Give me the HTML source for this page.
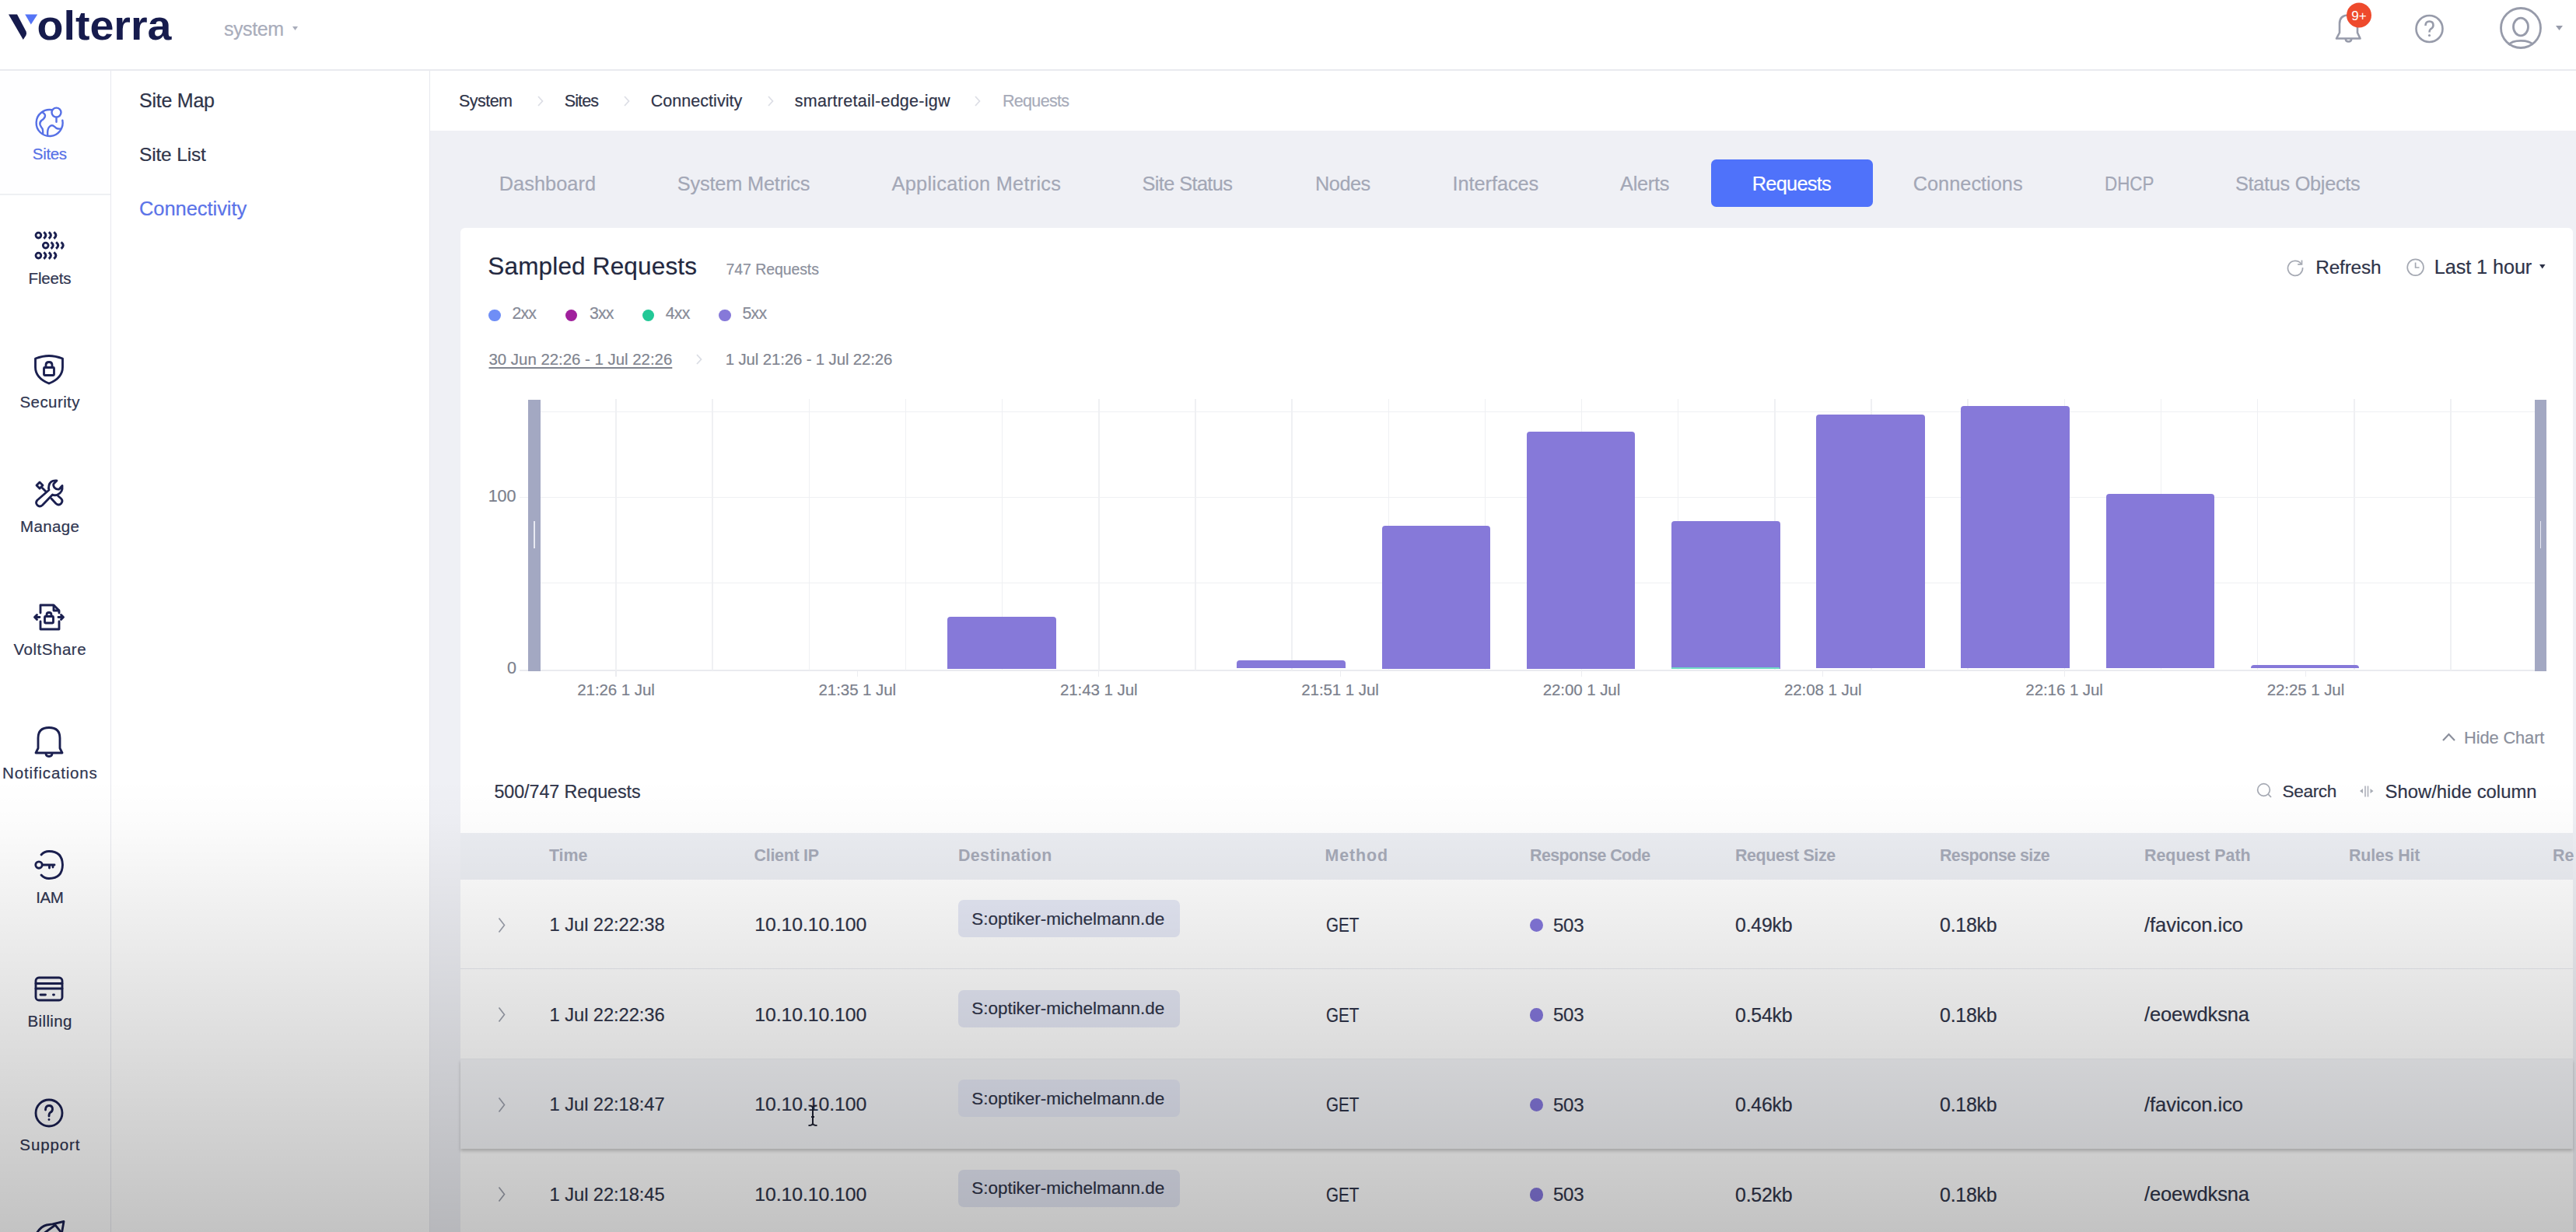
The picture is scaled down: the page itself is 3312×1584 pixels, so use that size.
<!DOCTYPE html>
<html><head><meta charset="utf-8"><style>
html,body{margin:0;padding:0;}
body{width:3312px;height:1584px;position:relative;overflow:hidden;background:#fff;font-family:"Liberation Sans", sans-serif;}
.t{position:absolute;line-height:1;white-space:nowrap;-webkit-text-stroke:0.2px currentColor;}
.r{position:absolute;}
</style></head><body>
<div class="r" style="left:0.0px;top:0.0px;width:3312.0px;height:90.0px;background:#ffffff;"></div>
<div class="r" style="left:0.0px;top:89.0px;width:3312.0px;height:2.0px;background:#e9eaef;"></div>
<div class="r" style="left:0.0px;top:91.0px;width:143.0px;height:1493.0px;background:#ffffff;"></div>
<div class="r" style="left:142.0px;top:91.0px;width:1.0px;height:1493.0px;background:#e7e8ee;"></div>
<div class="r" style="left:143.0px;top:91.0px;width:410.0px;height:1493.0px;background:#ffffff;"></div>
<div class="r" style="left:552.0px;top:91.0px;width:1.0px;height:1493.0px;background:#e7e8ee;"></div>
<div class="r" style="left:553.0px;top:91.0px;width:2759.0px;height:77.0px;background:#ffffff;"></div>
<div class="r" style="left:553.0px;top:168.0px;width:2759.0px;height:1416.0px;background:#eff0f5;"></div>
<div class="r" style="left:0.0px;top:91.0px;width:142.0px;height:158.0px;background:#fefeff;"></div>
<div class="r" style="left:0.0px;top:249.0px;width:142.0px;height:2.0px;background:#eef0f3;"></div>
<svg class="r" style="left:0;top:0" width="240" height="90" viewBox="0 0 240 90">
<path d="M11 18.4 L22 18.4 L33.6 40.5 Q34.6 43 33.4 45.5 L29.8 51 Z" fill="#161b4d"/>
<path d="M32.2 18.4 L48.2 18.4 L39.8 31.4 Z" fill="#5574f5"/>
<text x="47.5" y="51" font-family="Liberation Sans" font-weight="700" font-size="51" fill="#161b4d" textLength="173" lengthAdjust="spacingAndGlyphs">olterra</text>
</svg>
<div class="t" style="left:288.0px;top:25.2px;font-size:25px;color:#a9adbb;letter-spacing:-0.44px;">system</div>
<svg class="r" style="left:375px;top:33px" width="10" height="8"><path d="M1 1 L8 1 L4.5 6 Z" fill="#a9adbb"/></svg>
<svg class="r" style="left:2990px;top:0px" width="80" height="70" viewBox="0 0 80 70">
<path d="M14 49.5 L44.5 49.5 L41 42 L41 30.5 Q41 19.5 29.5 19.5 Q18 19.5 18 30.5 L18 42 Z" fill="none" stroke="#979baa" stroke-width="2.6" stroke-linejoin="round"/>
<path d="M25.8 50 Q25.8 53.5 29.5 53.5 Q33.2 53.5 33.2 50" fill="none" stroke="#979baa" stroke-width="2.6"/>
<circle cx="43" cy="19.5" r="16" fill="#ee4a2c"/>
<text x="43" y="26" text-anchor="middle" font-family="Liberation Sans" font-size="17" fill="#fff">9+</text>
</svg>
<svg class="r" style="left:3100px;top:14px" width="48" height="48" viewBox="0 0 48 48">
<circle cx="23.5" cy="23" r="17" fill="none" stroke="#979baa" stroke-width="2.6"/>
<path d="M18.5 19 Q18.5 13.5 23.5 13.5 Q28.5 13.5 28.5 18.5 Q28.5 21.5 25 23.5 Q23.5 24.5 23.5 27.5" fill="none" stroke="#979baa" stroke-width="2.6"/>
<circle cx="23.5" cy="31.5" r="1.6" fill="#979baa"/>
</svg>
<svg class="r" style="left:3210px;top:4px" width="64" height="64" viewBox="0 0 64 64">
<circle cx="31" cy="32" r="25.5" fill="none" stroke="#979baa" stroke-width="2.8"/>
<ellipse cx="31" cy="30.5" rx="9.5" ry="11.3" fill="none" stroke="#979baa" stroke-width="2.8"/>
<path d="M15.5 54 Q19 48.3 31 48.3 Q43 48.3 46.5 53.5" fill="none" stroke="#979baa" stroke-width="2.8"/>
</svg>
<svg class="r" style="left:3285px;top:32px" width="12" height="9"><path d="M1 1 L10 1 L5.5 7 Z" fill="#979baa"/></svg>
<div class="t" style="left:-236.2px;width:600px;text-align:center;top:188.3px;font-size:20.5px;color:#5670e6;letter-spacing:-0.32px;">Sites</div>
<div class="t" style="left:-236.1px;width:600px;text-align:center;top:347.6px;font-size:20.5px;color:#2f3550;letter-spacing:-0.19px;">Fleets</div>
<div class="t" style="left:-235.8px;width:600px;text-align:center;top:507.2px;font-size:20.5px;color:#2f3550;letter-spacing:0.42px;">Security</div>
<div class="t" style="left:-235.8px;width:600px;text-align:center;top:666.6px;font-size:20.5px;color:#2f3550;letter-spacing:0.38px;">Manage</div>
<div class="t" style="left:-235.7px;width:600px;text-align:center;top:824.6px;font-size:20.5px;color:#2f3550;letter-spacing:0.51px;">VoltShare</div>
<div class="t" style="left:-235.6px;width:600px;text-align:center;top:984.2px;font-size:20.5px;color:#2f3550;letter-spacing:0.84px;">Notifications</div>
<div class="t" style="left:-236.2px;width:600px;text-align:center;top:1143.6px;font-size:20.5px;color:#2f3550;letter-spacing:-0.48px;">IAM</div>
<div class="t" style="left:-235.8px;width:600px;text-align:center;top:1303.0px;font-size:20.5px;color:#2f3550;letter-spacing:0.37px;">Billing</div>
<div class="t" style="left:-235.6px;width:600px;text-align:center;top:1462.4px;font-size:20.5px;color:#2f3550;letter-spacing:0.90px;">Support</div>
<svg class="r" style="left:39.0px;top:133.0px" width="48" height="48" viewBox="0 0 48 48"><g fill="none" stroke="#5670e6" stroke-width="2.4" stroke-linecap="round" stroke-linejoin="round">
<path d="M27.6 8.3 A17 17 0 1 0 41.3 21.6"/>
<circle cx="33.5" cy="11.6" r="6"/><path d="M33.5 17.6 L33.5 23.8"/>
<path d="M15.3 11.2 Q19.6 13.6 18.9 16.6 Q18 19.8 14.2 22 Q11.6 24.4 12.6 27.6 Q13.6 30 15.6 32.5 Q16.4 35 16.2 38.5"/>
<path d="M22.2 40.6 Q21.6 33 24.5 30 Q27 27.5 29.5 28.7 Q31.5 30 33.5 31.8 Q36 33 39.8 32.4"/>
</g></svg>
<svg class="r" style="left:39.0px;top:291.0px" width="48" height="48" viewBox="0 0 48 48"><circle cx="10.4" cy="11.6" r="3.4" fill="none" stroke="#1b2050" stroke-width="2.8"/><path d="M17.299999999999997 7.3999999999999995 Q22.5 11.6 17.299999999999997 15.8" fill="none" stroke="#1b2050" stroke-width="3.1"/><path d="M23.799999999999997 7.3999999999999995 Q29.0 11.6 23.799999999999997 15.8" fill="none" stroke="#1b2050" stroke-width="3.1"/><path d="M30.299999999999997 7.3999999999999995 Q35.5 11.6 30.299999999999997 15.8" fill="none" stroke="#1b2050" stroke-width="3.1"/><circle cx="19.7" cy="24.6" r="3.4" fill="none" stroke="#1b2050" stroke-width="2.8"/><path d="M26.599999999999998 20.400000000000002 Q31.8 24.6 26.599999999999998 28.8" fill="none" stroke="#1b2050" stroke-width="3.1"/><path d="M33.1 20.400000000000002 Q38.300000000000004 24.6 33.1 28.8" fill="none" stroke="#1b2050" stroke-width="3.1"/><path d="M39.6 20.400000000000002 Q44.800000000000004 24.6 39.6 28.8" fill="none" stroke="#1b2050" stroke-width="3.1"/><circle cx="10.4" cy="37.6" r="3.4" fill="none" stroke="#1b2050" stroke-width="2.8"/><path d="M17.299999999999997 33.4 Q22.5 37.6 17.299999999999997 41.800000000000004" fill="none" stroke="#1b2050" stroke-width="3.1"/><path d="M23.799999999999997 33.4 Q29.0 37.6 23.799999999999997 41.800000000000004" fill="none" stroke="#1b2050" stroke-width="3.1"/><path d="M30.299999999999997 33.4 Q35.5 37.6 30.299999999999997 41.800000000000004" fill="none" stroke="#1b2050" stroke-width="3.1"/></svg>
<svg class="r" style="left:39.0px;top:450.4px" width="48" height="48" viewBox="0 0 48 48"><path d="M6.5 11 Q16 7.5 24 7.5 Q32 7.5 41.5 11 L41.5 22 Q41.5 36 24 43 Q6.5 36 6.5 22 Z" fill="none" stroke="#1b2050" stroke-width="2.85" stroke-linecap="round" stroke-linejoin="round"/>
<rect x="17.5" y="22.5" width="13" height="10" rx="1" fill="none" stroke="#1b2050" stroke-width="2.85" stroke-linecap="round" stroke-linejoin="round"/><path d="M20 22.5 L20 19.5 Q20 15.5 24 15.5 Q28 15.5 28 19.5 L28 22.5" fill="none" stroke="#1b2050" stroke-width="2.85" stroke-linecap="round" stroke-linejoin="round"/></svg>
<svg class="r" style="left:39.0px;top:609.9px" width="48" height="48" viewBox="0 0 48 48"><path d="M8 14 L12 10 L16 14 L12 18 Z" fill="none" stroke="#1b2050" stroke-width="2.85" stroke-linecap="round" stroke-linejoin="round"/><path d="M15 17 L20 22"/>
<path d="M15.5 17.5 L19.5 21.5" fill="none" stroke="#1b2050" stroke-width="2.85" stroke-linecap="round" stroke-linejoin="round"/>
<path d="M34 8 Q26 7 24 14 Q23 18 24 20 L9 33 Q6 36.5 9 39.5 Q12 42.5 15.5 39.5 L28.5 26 Q31.5 27.5 35 26 Q42 23 41 14.5 L37 19 Q33.5 19.5 31 17 Q29 14 30 12 Z" fill="none" stroke="#1b2050" stroke-width="2.85" stroke-linecap="round" stroke-linejoin="round"/>
<path d="M27 31 L33 37.5 Q36.5 40.5 39.5 37.5 Q42.5 34 39.5 31 L35.5 27.5" fill="none" stroke="#1b2050" stroke-width="2.85" stroke-linecap="round" stroke-linejoin="round"/></svg>
<svg class="r" style="left:39.0px;top:769.3px" width="48" height="48" viewBox="0 0 48 48"><path d="M13 19 L13 9 L30 9 L37 16 L37 19" fill="none" stroke="#1b2050" stroke-width="2.85" stroke-linecap="round" stroke-linejoin="round"/><path d="M30 9.5 L30 16 L36.5 16" fill="none" stroke="#1b2050" stroke-width="2.85" stroke-linecap="round" stroke-linejoin="round"/>
<path d="M13 30 L13 40 L37 40 L37 30" fill="none" stroke="#1b2050" stroke-width="2.85" stroke-linecap="round" stroke-linejoin="round"/>
<path d="M6 24.5 L12 24.5 M8.5 21.5 L5.5 24.5 L8.5 27.5" fill="none" stroke="#1b2050" stroke-width="2.85" stroke-linecap="round" stroke-linejoin="round"/><path d="M36 24.5 L42 24.5 M39.5 21.5 L42.5 24.5 L39.5 27.5" fill="none" stroke="#1b2050" stroke-width="2.85" stroke-linecap="round" stroke-linejoin="round"/>
<rect x="18.5" y="23.5" width="11" height="8.5" rx="1" fill="none" stroke="#1b2050" stroke-width="2.85" stroke-linecap="round" stroke-linejoin="round"/><path d="M21 23.5 L21 21.5 Q21 18.5 24 18.5 Q27 18.5 27 21.5 L27 23.5" fill="none" stroke="#1b2050" stroke-width="2.85" stroke-linecap="round" stroke-linejoin="round"/></svg>
<svg class="r" style="left:39.0px;top:928.7px" width="48" height="48" viewBox="0 0 48 48"><path d="M7 39 L41 39 L38 33 L38 20 Q38 6.5 24 6.5 Q10 6.5 10 20 L10 33 Z" fill="none" stroke="#1b2050" stroke-width="2.85" stroke-linecap="round" stroke-linejoin="round"/><path d="M20 39.5 Q20 43.5 24 43.5 Q28 43.5 28 39.5" fill="none" stroke="#1b2050" stroke-width="2.85" stroke-linecap="round" stroke-linejoin="round"/></svg>
<svg class="r" style="left:39.0px;top:1088.0px" width="48" height="48" viewBox="0 0 48 48"><path d="M14 11 Q18 6.5 24 6.5 Q41 6.5 41.5 24 Q41 41.5 24 41.5 Q18 41.5 14 37" fill="none" stroke="#1b2050" stroke-width="2.85" stroke-linecap="round" stroke-linejoin="round"/>
<circle cx="11" cy="24" r="4.2" fill="none" stroke="#1b2050" stroke-width="2.85" stroke-linecap="round" stroke-linejoin="round"/><path d="M15.2 24 L31 24 M24.5 24 L24.5 28 M29 24 L29 27" fill="none" stroke="#1b2050" stroke-width="2.85" stroke-linecap="round" stroke-linejoin="round"/></svg>
<svg class="r" style="left:39.0px;top:1247.5px" width="48" height="48" viewBox="0 0 48 48"><rect x="7" y="9" width="34" height="29" rx="4" fill="none" stroke="#1b2050" stroke-width="2.85" stroke-linecap="round" stroke-linejoin="round"/><path d="M7 16.5 L41 16.5 M7 23 L41 23" fill="none" stroke="#1b2050" stroke-width="2.85" stroke-linecap="round" stroke-linejoin="round"/><path d="M13 31 L19.5 31 M29.5 31 L30.5 31" fill="none" stroke="#1b2050" stroke-width="2.85" stroke-linecap="round" stroke-linejoin="round"/></svg>
<svg class="r" style="left:39.0px;top:1407.0px" width="48" height="48" viewBox="0 0 48 48"><circle cx="24" cy="24" r="17" fill="none" stroke="#1b2050" stroke-width="2.85" stroke-linecap="round" stroke-linejoin="round"/><path d="M19.5 20 Q19.5 14.5 24 14.5 Q28.5 14.5 28.5 19 Q28.5 22 25.5 23.5 Q24 24.5 24 28" fill="none" stroke="#1b2050" stroke-width="2.85" stroke-linecap="round" stroke-linejoin="round"/><circle cx="24" cy="32.5" r="1.4" fill="#1b2050"/></svg>
<svg class="r" style="left:39.0px;top:1566.0px" width="48" height="48" viewBox="0 0 48 48"><path d="M8.5 19 Q14 10.5 21 9 Q25 8.2 28.5 7.8 L43 4.5 L40.5 19" fill="none" stroke="#1b2050" stroke-width="2.85" stroke-linecap="round" stroke-linejoin="round"/><path d="M18.5 19 L32 9 L40 19" fill="none" stroke="#1b2050" stroke-width="2.85" stroke-linecap="round" stroke-linejoin="round"/></svg>
<div class="t" style="left:179.0px;top:116.8px;font-size:25px;color:#2f3449;letter-spacing:-0.24px;">Site Map</div>
<div class="t" style="left:179.0px;top:187.2px;font-size:24.5px;color:#2f3449;letter-spacing:-0.17px;">Site List</div>
<div class="t" style="left:179.0px;top:255.9px;font-size:25.5px;color:#5b73e8;letter-spacing:-0.06px;">Connectivity</div>
<div class="t" style="left:590.0px;top:119.7px;font-size:21.5px;color:#2f3449;letter-spacing:-0.54px;">System</div>
<div class="t" style="left:725.7px;top:119.7px;font-size:21.5px;color:#2f3449;letter-spacing:-0.88px;">Sites</div>
<div class="t" style="left:836.7px;top:119.7px;font-size:21.5px;color:#2f3449;letter-spacing:0.05px;">Connectivity</div>
<div class="t" style="left:1021.8px;top:119.7px;font-size:21.5px;color:#2f3449;letter-spacing:0.26px;">smartretail-edge-igw</div>
<div class="t" style="left:1289.0px;top:119.7px;font-size:21.5px;color:#a7abb9;letter-spacing:-0.69px;">Requests</div>
<svg class="r" style="left:690px;top:122px" width="10" height="16"><path d="M2 2 L7.5 8 L2 14" fill="none" stroke="#dcdee5" stroke-width="1.7"/></svg>
<svg class="r" style="left:801px;top:122px" width="10" height="16"><path d="M2 2 L7.5 8 L2 14" fill="none" stroke="#dcdee5" stroke-width="1.7"/></svg>
<svg class="r" style="left:986px;top:122px" width="10" height="16"><path d="M2 2 L7.5 8 L2 14" fill="none" stroke="#dcdee5" stroke-width="1.7"/></svg>
<svg class="r" style="left:1251.6px;top:122px" width="10" height="16"><path d="M2 2 L7.5 8 L2 14" fill="none" stroke="#dcdee5" stroke-width="1.7"/></svg>
<div class="t" style="left:641.7px;top:224.1px;font-size:25.3px;color:#a3a7b6;letter-spacing:0.07px;">Dashboard</div>
<div class="t" style="left:870.8px;top:224.1px;font-size:25.3px;color:#a3a7b6;letter-spacing:-0.17px;">System Metrics</div>
<div class="t" style="left:1146.6px;top:224.1px;font-size:25.3px;color:#a3a7b6;letter-spacing:0.28px;">Application Metrics</div>
<div class="t" style="left:1468.5px;top:224.1px;font-size:25.3px;color:#a3a7b6;letter-spacing:-0.59px;">Site Status</div>
<div class="t" style="left:1691.0px;top:224.1px;font-size:25.3px;color:#a3a7b6;letter-spacing:-0.48px;">Nodes</div>
<div class="t" style="left:1867.6px;top:224.1px;font-size:25.3px;color:#a3a7b6;letter-spacing:-0.05px;">Interfaces</div>
<div class="t" style="left:2083.0px;top:224.1px;font-size:25.3px;color:#a3a7b6;letter-spacing:-0.23px;">Alerts</div>
<div class="t" style="left:2459.7px;top:224.1px;font-size:25.3px;color:#a3a7b6;letter-spacing:0.03px;">Connections</div>
<div class="t" style="left:2706.0px;top:224.1px;font-size:25.3px;color:#a3a7b6;transform:scaleX(0.8858);transform-origin:0 0;">DHCP</div>
<div class="t" style="left:2873.9px;top:224.1px;font-size:25.3px;color:#a3a7b6;letter-spacing:-0.28px;">Status Objects</div>
<div class="r" style="left:2200.0px;top:205.0px;width:208.0px;height:61.0px;background:#4f72fa;border-radius:6.5px;"></div>
<div class="t" style="left:2252.8px;top:224.2px;font-size:25.3px;color:#ffffff;letter-spacing:-0.70px;">Requests</div>
<div class="r" style="left:592.0px;top:293.0px;width:2716.0px;height:1291.0px;background:#ffffff;border-radius:6px 6px 0 0;"></div>
<div class="t" style="left:627.3px;top:327.4px;font-size:31.5px;color:#232840;letter-spacing:0.17px;">Sampled Requests</div>
<div class="t" style="left:933.6px;top:336.6px;font-size:19.5px;color:#8b8f9c;letter-spacing:-0.09px;">747 Requests</div>
<div class="r" style="left:628.2px;top:397.5px;width:15.6px;height:15.6px;border-radius:50%;background:#6f8ef6"></div>
<div class="t" style="left:658.4px;top:393.1px;font-size:21.3px;color:#878b98;letter-spacing:-0.83px;">2xx</div>
<div class="r" style="left:726.6px;top:397.5px;width:15.6px;height:15.6px;border-radius:50%;background:#a0209c"></div>
<div class="t" style="left:758.0px;top:393.1px;font-size:21.3px;color:#878b98;letter-spacing:-0.83px;">3xx</div>
<div class="r" style="left:825.7px;top:397.5px;width:15.6px;height:15.6px;border-radius:50%;background:#22c896"></div>
<div class="t" style="left:855.8px;top:393.1px;font-size:21.3px;color:#878b98;letter-spacing:-0.83px;">4xx</div>
<div class="r" style="left:924.0px;top:397.5px;width:15.6px;height:15.6px;border-radius:50%;background:#8679d9"></div>
<div class="t" style="left:954.6px;top:393.1px;font-size:21.3px;color:#878b98;letter-spacing:-0.83px;">5xx</div>
<div class="t" style="left:628.5px;top:451.5px;font-size:20.4px;color:#80848f;text-decoration:underline;text-underline-offset:3px;text-decoration-thickness:1.5px;">30 Jun 22:26 - 1 Jul 22:26</div>
<svg class="r" style="left:894px;top:454px" width="10" height="16"><path d="M2 2 L7.5 8 L2 14" fill="none" stroke="#dadde4" stroke-width="1.8"/></svg>
<div class="t" style="left:932.8px;top:451.5px;font-size:20.4px;color:#80848f;letter-spacing:-0.13px;">1 Jul 21:26 - 1 Jul 22:26</div>
<svg class="r" style="left:2938px;top:329.5px" width="26" height="26" viewBox="0 0 26 26">
<path d="M20.5 9 A9.5 9.5 0 1 0 22.5 14" fill="none" stroke="#a5a9b3" stroke-width="1.7"/>
<path d="M21.5 4.5 L21.5 9.8 L16.2 9.8" fill="none" stroke="#a5a9b3" stroke-width="1.7"/>
</svg>
<div class="t" style="left:2977.3px;top:331.9px;font-size:24.4px;color:#2f3449;letter-spacing:-0.20px;">Refresh</div>
<svg class="r" style="left:3092px;top:330px" width="28" height="28" viewBox="0 0 28 28">
<circle cx="13.6" cy="13.7" r="10.4" fill="none" stroke="#a5a9b3" stroke-width="1.7"/>
<path d="M13.6 7.5 L13.6 14 L18.5 14" fill="none" stroke="#a5a9b3" stroke-width="1.7"/>
</svg>
<div class="t" style="left:3129.8px;top:331.2px;font-size:25.2px;color:#2f3449;letter-spacing:-0.06px;">Last 1 hour</div>
<svg class="r" style="left:3264px;top:339px" width="10" height="8"><path d="M1 1 L8.5 1 L4.75 6.5 Z" fill="#2b3046"/></svg>
<div class="r" style="left:695.0px;top:528.8px;width:2564.0px;height:1.5px;background:#eff0f3;"></div>
<div class="r" style="left:695.0px;top:638.8px;width:2564.0px;height:1.5px;background:#eff0f3;"></div>
<div class="r" style="left:695.0px;top:748.8px;width:2564.0px;height:1.5px;background:#eff0f3;"></div>
<div class="r" style="left:668.0px;top:638.8px;width:27.0px;height:1.5px;background:#eff0f3;"></div>
<div class="r" style="left:668.0px;top:861.2px;width:2591.0px;height:1.6px;background:#eaebef;"></div>
<div class="r" style="left:791.2px;top:513.0px;width:1.5px;height:349.0px;background:#eff0f3;"></div>
<div class="r" style="left:915.4px;top:513.0px;width:1.5px;height:349.0px;background:#eff0f3;"></div>
<div class="r" style="left:1039.5px;top:513.0px;width:1.5px;height:349.0px;background:#eff0f3;"></div>
<div class="r" style="left:1163.7px;top:513.0px;width:1.5px;height:349.0px;background:#eff0f3;"></div>
<div class="r" style="left:1287.8px;top:513.0px;width:1.5px;height:349.0px;background:#eff0f3;"></div>
<div class="r" style="left:1412.0px;top:513.0px;width:1.5px;height:349.0px;background:#eff0f3;"></div>
<div class="r" style="left:1536.2px;top:513.0px;width:1.5px;height:349.0px;background:#eff0f3;"></div>
<div class="r" style="left:1660.3px;top:513.0px;width:1.5px;height:349.0px;background:#eff0f3;"></div>
<div class="r" style="left:1784.5px;top:513.0px;width:1.5px;height:349.0px;background:#eff0f3;"></div>
<div class="r" style="left:1908.6px;top:513.0px;width:1.5px;height:349.0px;background:#eff0f3;"></div>
<div class="r" style="left:2032.8px;top:513.0px;width:1.5px;height:349.0px;background:#eff0f3;"></div>
<div class="r" style="left:2156.9px;top:513.0px;width:1.5px;height:349.0px;background:#eff0f3;"></div>
<div class="r" style="left:2281.1px;top:513.0px;width:1.5px;height:349.0px;background:#eff0f3;"></div>
<div class="r" style="left:2405.2px;top:513.0px;width:1.5px;height:349.0px;background:#eff0f3;"></div>
<div class="r" style="left:2529.4px;top:513.0px;width:1.5px;height:349.0px;background:#eff0f3;"></div>
<div class="r" style="left:2653.5px;top:513.0px;width:1.5px;height:349.0px;background:#eff0f3;"></div>
<div class="r" style="left:2777.7px;top:513.0px;width:1.5px;height:349.0px;background:#eff0f3;"></div>
<div class="r" style="left:2901.8px;top:513.0px;width:1.5px;height:349.0px;background:#eff0f3;"></div>
<div class="r" style="left:3026.0px;top:513.0px;width:1.5px;height:349.0px;background:#eff0f3;"></div>
<div class="r" style="left:3150.1px;top:513.0px;width:1.5px;height:349.0px;background:#eff0f3;"></div>
<div class="r" style="left:791.4px;top:862.5px;width:1.2px;height:7.0px;background:#ecedf1;"></div>
<div class="t" style="left:492.0px;width:600px;text-align:center;top:876.9px;font-size:20.5px;color:#7b7f8c;letter-spacing:-0.07px;">21:26 1 Jul</div>
<div class="r" style="left:1101.8px;top:862.5px;width:1.2px;height:7.0px;background:#ecedf1;"></div>
<div class="t" style="left:802.3px;width:600px;text-align:center;top:876.9px;font-size:20.5px;color:#7b7f8c;letter-spacing:-0.07px;">21:35 1 Jul</div>
<div class="r" style="left:1412.1px;top:862.5px;width:1.2px;height:7.0px;background:#ecedf1;"></div>
<div class="t" style="left:1112.7px;width:600px;text-align:center;top:876.9px;font-size:20.5px;color:#7b7f8c;letter-spacing:-0.07px;">21:43 1 Jul</div>
<div class="r" style="left:1722.5px;top:862.5px;width:1.2px;height:7.0px;background:#ecedf1;"></div>
<div class="t" style="left:1423.0px;width:600px;text-align:center;top:876.9px;font-size:20.5px;color:#7b7f8c;letter-spacing:-0.07px;">21:51 1 Jul</div>
<div class="r" style="left:2032.8px;top:862.5px;width:1.2px;height:7.0px;background:#ecedf1;"></div>
<div class="t" style="left:1733.4px;width:600px;text-align:center;top:876.9px;font-size:20.5px;color:#7b7f8c;letter-spacing:-0.07px;">22:00 1 Jul</div>
<div class="r" style="left:2343.2px;top:862.5px;width:1.2px;height:7.0px;background:#ecedf1;"></div>
<div class="t" style="left:2043.7px;width:600px;text-align:center;top:876.9px;font-size:20.5px;color:#7b7f8c;letter-spacing:-0.07px;">22:08 1 Jul</div>
<div class="r" style="left:2653.5px;top:862.5px;width:1.2px;height:7.0px;background:#ecedf1;"></div>
<div class="t" style="left:2354.1px;width:600px;text-align:center;top:876.9px;font-size:20.5px;color:#7b7f8c;letter-spacing:-0.07px;">22:16 1 Jul</div>
<div class="r" style="left:2963.9px;top:862.5px;width:1.2px;height:7.0px;background:#ecedf1;"></div>
<div class="t" style="left:2664.4px;width:600px;text-align:center;top:876.9px;font-size:20.5px;color:#7b7f8c;letter-spacing:-0.07px;">22:25 1 Jul</div>
<div class="t" style="right:2648.5px;top:628.0px;font-size:21.5px;color:#7b7f8c;">100</div>
<div class="t" style="right:2648.0px;top:849.0px;font-size:21.5px;color:#7b7f8c;">0</div>
<div class="r" style="left:1218.0px;top:793.0px;width:139.5px;height:66.5px;background:#8679d9;border-radius:4px 4px 0 0;"></div>
<div class="r" style="left:1590.4px;top:848.7px;width:139.5px;height:10.8px;background:#8679d9;border-radius:4px 4px 0 0;"></div>
<div class="r" style="left:1776.6px;top:676.0px;width:139.5px;height:183.5px;background:#8679d9;border-radius:4px 4px 0 0;"></div>
<div class="r" style="left:1962.8px;top:555.0px;width:139.5px;height:304.5px;background:#8679d9;border-radius:4px 4px 0 0;"></div>
<div class="r" style="left:2149.0px;top:670.0px;width:139.5px;height:189.5px;background:#8679d9;border-radius:4px 4px 0 0;"></div>
<div class="r" style="left:2335.2px;top:533.4px;width:139.5px;height:326.1px;background:#8679d9;border-radius:4px 4px 0 0;"></div>
<div class="r" style="left:2521.4px;top:522.4px;width:139.5px;height:337.1px;background:#8679d9;border-radius:4px 4px 0 0;"></div>
<div class="r" style="left:2707.6px;top:634.7px;width:139.5px;height:224.8px;background:#8679d9;border-radius:4px 4px 0 0;"></div>
<div class="r" style="left:2893.8px;top:854.7px;width:139.5px;height:4.8px;background:#8679d9;border-radius:4px 4px 0 0;"></div>
<div class="r" style="left:2148.8px;top:857.5px;width:139.2px;height:2.0px;background:#6fdac6;"></div>
<div class="r" style="left:679.0px;top:513.6px;width:15.7px;height:349.4px;background:#a3a8c2;"></div>
<div class="r" style="left:686.0px;top:670.0px;width:1.5px;height:35.0px;background:#e8e9f2;"></div>
<div class="r" style="left:3258.6px;top:513.6px;width:15.7px;height:349.4px;background:#a3a8c2;"></div>
<div class="r" style="left:3265.6px;top:670.0px;width:1.5px;height:35.0px;background:#e8e9f2;"></div>
<svg class="r" style="left:3138px;top:938px" width="22" height="18"><path d="M3 14 L10.5 6 L18 14" fill="none" stroke="#8b8f9c" stroke-width="2.2"/></svg>
<div class="t" style="left:3168.0px;top:938.3px;font-size:21.8px;color:#8b8f9c;letter-spacing:-0.09px;">Hide Chart</div>
<div class="t" style="left:635.4px;top:1007.0px;font-size:23.3px;color:#2f3449;letter-spacing:-0.06px;">500/747 Requests</div>
<svg class="r" style="left:2898px;top:1003px" width="28" height="28" viewBox="0 0 28 28">
<circle cx="12.5" cy="12.5" r="7.8" fill="none" stroke="#a5a9b3" stroke-width="1.7"/><path d="M18.2 18.2 L22 22" stroke="#a5a9b3" stroke-width="1.7"/>
</svg>
<div class="t" style="left:2934.4px;top:1007.2px;font-size:22.6px;color:#2f3449;letter-spacing:-0.32px;">Search</div>
<svg class="r" style="left:3030px;top:1006px" width="28" height="22" viewBox="0 0 28 22">
<path d="M11 4.5 L11 18.5 M14.5 4.5 L14.5 18.5" stroke="#b3b6bf" stroke-width="1.7"/>
<path d="M4 11 L8 8 L8 14 Z M17.5 8 L21.5 11 L17.5 14 Z" fill="#a9adb6"/>
</svg>
<div class="t" style="left:3066.5px;top:1006.2px;font-size:23.8px;color:#2f3449;letter-spacing:0.04px;">Show/hide column</div>
<div class="r" style="left:592.0px;top:1070.5px;width:2716.0px;height:60.0px;background:#eceef3;"></div>
<div class="t" style="left:706.0px;top:1090.3px;font-size:21.4px;color:#a6aab8;font-weight:700;-webkit-text-stroke:0;letter-spacing:-0.08px;">Time</div>
<div class="t" style="left:969.5px;top:1090.3px;font-size:21.4px;color:#a6aab8;font-weight:700;-webkit-text-stroke:0;letter-spacing:-0.25px;">Client IP</div>
<div class="t" style="left:1232.0px;top:1090.3px;font-size:21.4px;color:#a6aab8;font-weight:700;-webkit-text-stroke:0;letter-spacing:0.39px;">Destination</div>
<div class="t" style="left:1703.5px;top:1090.3px;font-size:21.4px;color:#a6aab8;font-weight:700;-webkit-text-stroke:0;letter-spacing:0.91px;">Method</div>
<div class="t" style="left:1967.0px;top:1090.3px;font-size:21.4px;color:#a6aab8;font-weight:700;-webkit-text-stroke:0;letter-spacing:-0.55px;">Response Code</div>
<div class="t" style="left:2231.0px;top:1090.3px;font-size:21.4px;color:#a6aab8;font-weight:700;-webkit-text-stroke:0;letter-spacing:-0.36px;">Request Size</div>
<div class="t" style="left:2494.0px;top:1090.3px;font-size:21.4px;color:#a6aab8;font-weight:700;-webkit-text-stroke:0;letter-spacing:-0.58px;">Response size</div>
<div class="t" style="left:2757.0px;top:1090.3px;font-size:21.4px;color:#a6aab8;font-weight:700;-webkit-text-stroke:0;">Request Path</div>
<div class="t" style="left:3020.0px;top:1090.3px;font-size:21.4px;color:#a6aab8;font-weight:700;-webkit-text-stroke:0;letter-spacing:-0.16px;">Rules Hit</div>
<div class="t" style="left:3282.0px;top:1090.3px;font-size:21.4px;color:#a6aab8;font-weight:700;-webkit-text-stroke:0;">Re</div>
<div class="r" style="left:592.0px;top:1245.0px;width:2716.0px;height:1.0px;background:#e9ebf0;"></div>
<svg class="r" style="left:636px;top:1177.5px" width="18" height="24"><path d="M5.5 2.5 L12.5 11.5 L5.5 20.5" fill="none" stroke="#9da1ad" stroke-width="1.7"/></svg>
<div class="t" style="left:706.6px;top:1178.2px;font-size:23.7px;color:#2f3449;letter-spacing:-0.06px;">1 Jul 22:22:38</div>
<div class="t" style="left:970.3px;top:1177.2px;font-size:24.8px;color:#2f3449;letter-spacing:-0.07px;">10.10.10.100</div>
<div class="r" style="left:1232.0px;top:1157.2px;width:285.0px;height:48.1px;background:#e6e9f6;border-radius:7px;"></div>
<div class="t" style="left:1249.3px;top:1170.5px;font-size:22.5px;color:#2f3449;letter-spacing:-0.04px;">S:optiker-michelmann.de</div>
<div class="t" style="left:1704.8px;top:1177.0px;font-size:25px;color:#2f3449;transform:scaleX(0.8267);transform-origin:0 0;">GET</div>
<div class="r" style="left:1966.8999999999999px;top:1180.8999999999999px;width:17.4px;height:17.4px;border-radius:50%;background:#8477dc"></div>
<div class="t" style="left:1996.9px;top:1177.9px;font-size:24px;color:#2f3449;letter-spacing:-0.12px;">503</div>
<div class="t" style="left:2231.0px;top:1177.1px;font-size:24.9px;color:#2f3449;letter-spacing:-0.21px;">0.49kb</div>
<div class="t" style="left:2494.0px;top:1177.1px;font-size:24.9px;color:#2f3449;letter-spacing:-0.21px;">0.18kb</div>
<div class="t" style="left:2757.0px;top:1176.6px;font-size:25.5px;color:#2f3449;letter-spacing:-0.05px;">/favicon.ico</div>
<div class="r" style="left:592.0px;top:1360.5px;width:2716.0px;height:1.0px;background:#f0f1f4;"></div>
<svg class="r" style="left:636px;top:1293.0px" width="18" height="24"><path d="M5.5 2.5 L12.5 11.5 L5.5 20.5" fill="none" stroke="#9da1ad" stroke-width="1.7"/></svg>
<div class="t" style="left:706.6px;top:1293.7px;font-size:23.7px;color:#2f3449;letter-spacing:-0.06px;">1 Jul 22:22:36</div>
<div class="t" style="left:970.3px;top:1292.7px;font-size:24.8px;color:#2f3449;letter-spacing:-0.07px;">10.10.10.100</div>
<div class="r" style="left:1232.0px;top:1272.7px;width:285.0px;height:48.1px;background:#e6e9f6;border-radius:7px;"></div>
<div class="t" style="left:1249.3px;top:1286.0px;font-size:22.5px;color:#2f3449;letter-spacing:-0.04px;">S:optiker-michelmann.de</div>
<div class="t" style="left:1704.8px;top:1292.5px;font-size:25px;color:#2f3449;transform:scaleX(0.8267);transform-origin:0 0;">GET</div>
<div class="r" style="left:1966.8999999999999px;top:1296.3999999999999px;width:17.4px;height:17.4px;border-radius:50%;background:#8477dc"></div>
<div class="t" style="left:1996.9px;top:1293.4px;font-size:24px;color:#2f3449;letter-spacing:-0.12px;">503</div>
<div class="t" style="left:2231.0px;top:1292.6px;font-size:24.9px;color:#2f3449;letter-spacing:-0.21px;">0.54kb</div>
<div class="t" style="left:2494.0px;top:1292.6px;font-size:24.9px;color:#2f3449;letter-spacing:-0.21px;">0.18kb</div>
<div class="t" style="left:2757.0px;top:1292.1px;font-size:25.5px;color:#2f3449;letter-spacing:-0.12px;">/eoewdksna</div>
<div class="r" style="left:592.0px;top:1361.5px;width:2716.0px;height:115.5px;background:#f4f5f8;box-shadow:0 3px 4px rgba(0,0,0,0.2);"></div>
<svg class="r" style="left:636px;top:1408.5px" width="18" height="24"><path d="M5.5 2.5 L12.5 11.5 L5.5 20.5" fill="none" stroke="#9da1ad" stroke-width="1.7"/></svg>
<div class="t" style="left:706.6px;top:1409.2px;font-size:23.7px;color:#2f3449;letter-spacing:-0.06px;">1 Jul 22:18:47</div>
<div class="t" style="left:970.3px;top:1408.2px;font-size:24.8px;color:#2f3449;letter-spacing:-0.07px;">10.10.10.100</div>
<div class="r" style="left:1232.0px;top:1388.2px;width:285.0px;height:48.1px;background:#e6e9f6;border-radius:7px;"></div>
<div class="t" style="left:1249.3px;top:1401.5px;font-size:22.5px;color:#2f3449;letter-spacing:-0.04px;">S:optiker-michelmann.de</div>
<div class="t" style="left:1704.8px;top:1408.0px;font-size:25px;color:#2f3449;transform:scaleX(0.8267);transform-origin:0 0;">GET</div>
<div class="r" style="left:1966.8999999999999px;top:1411.8999999999999px;width:17.4px;height:17.4px;border-radius:50%;background:#8477dc"></div>
<div class="t" style="left:1996.9px;top:1408.9px;font-size:24px;color:#2f3449;letter-spacing:-0.12px;">503</div>
<div class="t" style="left:2231.0px;top:1408.1px;font-size:24.9px;color:#2f3449;letter-spacing:-0.21px;">0.46kb</div>
<div class="t" style="left:2494.0px;top:1408.1px;font-size:24.9px;color:#2f3449;letter-spacing:-0.21px;">0.18kb</div>
<div class="t" style="left:2757.0px;top:1407.6px;font-size:25.5px;color:#2f3449;letter-spacing:-0.05px;">/favicon.ico</div>
<div class="r" style="left:592.0px;top:1591.5px;width:2716.0px;height:1.0px;background:#e9ebf0;"></div>
<svg class="r" style="left:636px;top:1524.0px" width="18" height="24"><path d="M5.5 2.5 L12.5 11.5 L5.5 20.5" fill="none" stroke="#9da1ad" stroke-width="1.7"/></svg>
<div class="t" style="left:706.6px;top:1524.7px;font-size:23.7px;color:#2f3449;letter-spacing:-0.06px;">1 Jul 22:18:45</div>
<div class="t" style="left:970.3px;top:1523.7px;font-size:24.8px;color:#2f3449;letter-spacing:-0.07px;">10.10.10.100</div>
<div class="r" style="left:1232.0px;top:1503.7px;width:285.0px;height:48.1px;background:#e6e9f6;border-radius:7px;"></div>
<div class="t" style="left:1249.3px;top:1517.0px;font-size:22.5px;color:#2f3449;letter-spacing:-0.04px;">S:optiker-michelmann.de</div>
<div class="t" style="left:1704.8px;top:1523.5px;font-size:25px;color:#2f3449;transform:scaleX(0.8267);transform-origin:0 0;">GET</div>
<div class="r" style="left:1966.8999999999999px;top:1527.3999999999999px;width:17.4px;height:17.4px;border-radius:50%;background:#8477dc"></div>
<div class="t" style="left:1996.9px;top:1524.4px;font-size:24px;color:#2f3449;letter-spacing:-0.12px;">503</div>
<div class="t" style="left:2231.0px;top:1523.6px;font-size:24.9px;color:#2f3449;letter-spacing:-0.21px;">0.52kb</div>
<div class="t" style="left:2494.0px;top:1523.6px;font-size:24.9px;color:#2f3449;letter-spacing:-0.21px;">0.18kb</div>
<div class="t" style="left:2757.0px;top:1523.1px;font-size:25.5px;color:#2f3449;letter-spacing:-0.12px;">/eoewdksna</div>
<svg class="r" style="left:1035.6px;top:1418.5px" width="18" height="30"><path d="M3.5 2.5 Q9 2.5 9 5.5 Q9 2.5 14.5 2.5 M9 5.5 L9 25 M3.5 28 Q9 28 9 25 Q9 28 14.5 28 M7 17 L11 17" fill="none" stroke="#1f2233" stroke-width="2"/></svg>
<div class="r" style="left:0;top:1000px;width:3312px;height:584px;background:linear-gradient(to bottom, rgba(0,0,0,0) 0%, rgba(0,0,0,0.012) 9%, rgba(0,0,0,0.11) 49%, rgba(0,0,0,0.237) 100%);"></div>
</body></html>
